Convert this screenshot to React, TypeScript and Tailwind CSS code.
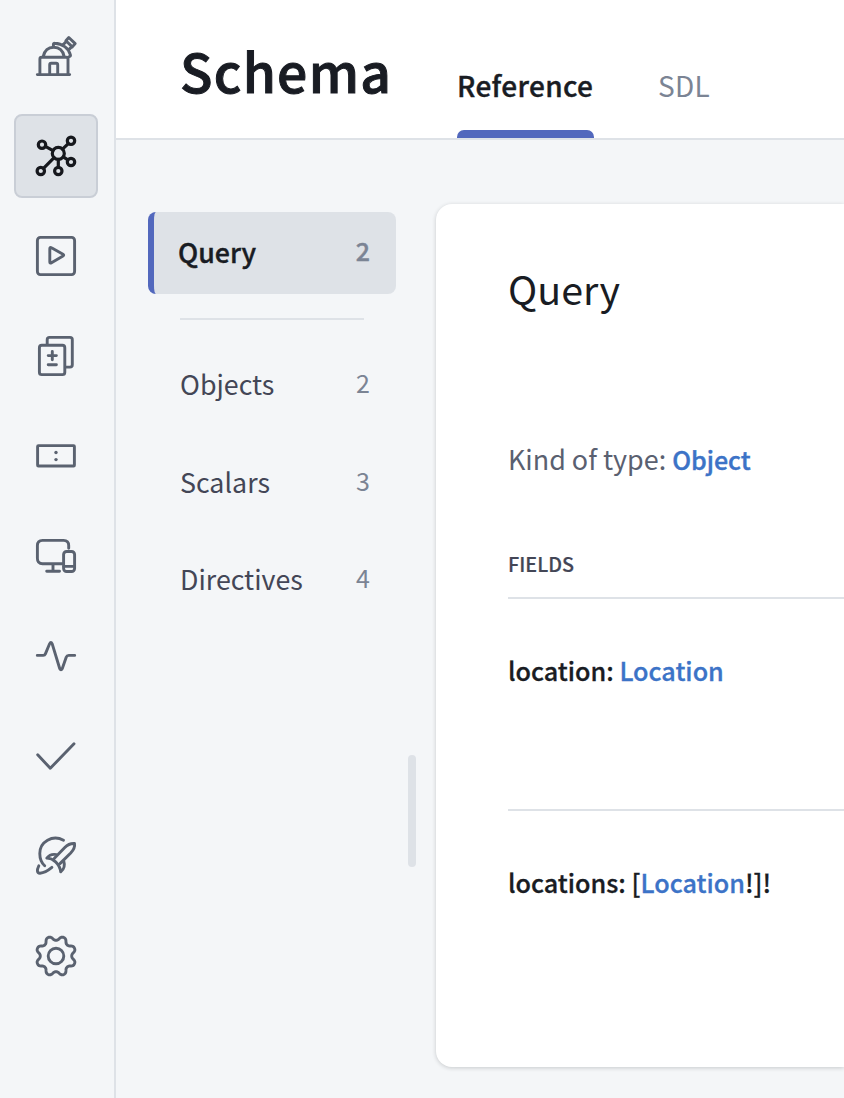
import type { ReactNode } from "react";

const gearPath =
  Array.from({ length: 160 }, (_, i) => {
    const a = (i / 160) * Math.PI * 2;
    const r = 17.9 - 2.6 * Math.tanh(1.2 * Math.cos(8 * a));
    return `${i ? "L" : "M"}${(24 + r * Math.sin(a)).toFixed(2)} ${(24 - r * Math.cos(a)).toFixed(2)}`;
  }).join("") + "Z";

const icons: { name: string; art: ReactNode }[] = [
  {
    name: "Observatory",
    art: (
      <>
        <path d="M5.3 42.6H37.7M7.9 42V27.1q0-1.8 1.8-1.8H34.2q1.8 0 1.8 1.8V42M17.7 42V32.8q0-1.5 1.5-1.5h5q1.5 0 1.5 1.5V42M11.2 24.6C12.5 18.5 16.5 15.2 21.7 15.2S31 18.5 32.2 24.6" />
        <path d="M21.4 14.7V12.4q0-1.2 1.2-1.1C30.5 11.6 36.5 16.2 38.4 22.9q.3 1.2-.7 1.5L36.5 25.1M31.6 12.2L34.4 9.2M36.8 17.6L39.8 14.6M36.8 5.5L33.9 8.7L40.3 14.9L43.2 11.6Z" />
      </>
    ),
  },
  {
    name: "Schema",
    art: (
      <g strokeWidth="3.2">
        <circle cx="26.3" cy="21.4" r="6" />
        <circle cx="10" cy="12.7" r="3.7" />
        <circle cx="39" cy="8.8" r="3.7" />
        <circle cx="39" cy="30" r="3.7" />
        <circle cx="26.3" cy="39" r="3.7" />
        <circle cx="8.8" cy="39" r="3.7" />
        <path d="M13.4 14.4L21 18.6M36.3 11.6L30.5 17.2M31.3 24.8L35.8 27.8M26.3 27.4V35.3M11.5 36.3L22.1 25.7" />
      </g>
    ),
  },
  {
    name: "Explorer",
    art: (
      <>
        <rect x="5.4" y="5.4" width="37.2" height="37.2" rx="3" />
        <path d="M17.8 16.7q0-1.9 1.7-.9L31 22.2q1.4.9 0 1.7L19.5 30.8q-1.7 1-1.7-.9Z" />
      </>
    ),
  },
  {
    name: "Changelog",
    art: (
      <>
        <rect x="7.4" y="13.3" width="25.4" height="29.3" rx="2.4" />
        <path d="M15.2 12.5V7.7q0-2.3 2.3-2.3H38q2.3 0 2.3 2.3V32.8q0 2.3-2.3 2.3H34M20.3 19.5V27.7M16.2 23.6H24.4M16.2 32.7H24.4" />
      </>
    ),
  },
  {
    name: "Fields",
    art: (
      <>
        <rect x="5.6" y="13.6" width="36.8" height="20.4" rx="0.8" />
        <circle cx="24" cy="20.5" r="1.7" fill="currentColor" stroke="none" />
        <circle cx="24" cy="27.6" r="1.7" fill="currentColor" stroke="none" />
      </>
    ),
  },
  {
    name: "Clients",
    art: (
      <>
        <path d="M36.7 16.3V13.6q0-5.2-5.2-5.2H10.6q-5.2 0-5.2 5.2V26.5q0 5.2 5.2 5.2H30M21 32V39M14.7 39.3H27.5" />
        <rect x="31.6" y="19.5" width="11" height="20" rx="3" />
        <path d="M32 34.4H42" />
      </>
    ),
  },
  {
    name: "Operations",
    art: (
      <path d="M5.3 23.4H11.2Q12.8 23.4 13.4 21.9L17.6 11.8Q18.9 9.2 20.2 11.8L27.7 36.5Q29 39 30.3 36.5L34.2 25.2Q34.9 23.4 36.7 23.4H42.7" />
    ),
  },
  { name: "Checks", art: <path d="M5.7 22.8L18.3 36.3L42 11.7" /> },
  {
    name: "Launches",
    art: (
      <path d="M31.5 8.2C20.5 2.2 7.8 9.8 7.8 21.5C7.8 26.5 9.4 30.8 12.7 33.8M6.8 33.8C4.7 38 4.9 41.3 8 41.2C11.5 41 15.8 38.8 19.9 35.4M22.4 26.2L32.8 15.5C35.5 12.7 39.5 11.3 42.5 11.5C43 14.5 41.3 18.3 38.7 21L28.2 31.4M24.5 22.6C20.2 21.8 17.3 22.8 14.8 26.1C20.8 26.1 27.7 31.5 28.7 39.9C32.3 37.1 33.2 33.5 31.7 28.7" />
    ),
  },
  {
    name: "Settings",
    art: (
      <>
        <path d={gearPath} />
        <circle cx="24" cy="24" r="7.8" />
      </>
    ),
  },
];

const groups = [
  { label: "Objects", count: 2 },
  { label: "Scalars", count: 3 },
  { label: "Directives", count: 4 },
];

export default function App() {
  return (
    <div className="flex h-[1098px] w-full overflow-hidden bg-[#f4f6f8] font-['Noto_Sans_CJK_SC',sans-serif] text-[#191c23]">
      <nav className="flex w-[116px] shrink-0 flex-col items-center gap-4 border-r-2 border-[#dee2e7] pt-[14px] pr-[2px]">
        {icons.map(({ name, art }) => (
          <button
            key={name}
            aria-label={name}
            className={
              name === "Schema"
                ? "flex size-[84px] shrink-0 items-center justify-center rounded-lg border-2 border-[#c9ced6] bg-[#dee2e7] text-[#16181d]"
                : "flex size-[84px] shrink-0 items-center justify-center text-[#5a6270]"
            }
          >
            <svg
              viewBox="0 0 48 48"
              className="size-12"
              fill="none"
              stroke="currentColor"
              strokeWidth="2.9"
              strokeLinecap="round"
              strokeLinejoin="round"
            >
              {art}
            </svg>
          </button>
        ))}
      </nav>
      <div className="flex min-w-0 grow flex-col">
        <header className="flex h-[140px] shrink-0 border-b-2 border-[#dee2e7] bg-white pl-16">
          <h1 className="w-[277px] pt-[30px] text-[53.4px] leading-[80px] font-medium tracking-[1.3px] [-webkit-text-stroke:1px]">
            Schema
          </h1>
          <div className="flex w-[137px] flex-col justify-between">
            <span className="pt-[65px] text-[28px] leading-[40px] font-medium tracking-[0.35px] [-webkit-text-stroke:0.4px]">
              Reference
            </span>
            <span className="h-2 rounded-t-[7px] bg-[#5268bd]" />
          </div>
          <span className="ml-16 pt-[65px] text-[28px] leading-[40px] tracking-[0.3px] text-[#7b8494]">SDL</span>
        </header>
        <div className="flex grow">
          <aside className="flex w-[292px] shrink-0 flex-col pt-[72px] pl-8">
            <div className="flex h-[82px] w-[248px] items-center justify-between rounded-lg border-l-[6px] border-[#5268bd] bg-[#dee2e7] pr-[26px] pl-6 font-medium [-webkit-text-stroke:0.4px]">
              <span className="pb-[2px] text-[26.8px] leading-[40px]">Query</span>
              <span className="pb-[6px] text-[25px] leading-[40px] text-[#7b8494]">2</span>
            </div>
            <div className="mt-6 ml-8 h-[2px] w-[184px] bg-[#dee2e7]" />
            <div className="mt-4 flex w-[248px] flex-col">
              {groups.map(({ label, count }) => (
                <div key={label} className="flex h-[97.5px] items-center justify-between pr-[26px] pl-8">
                  <span className="pb-px text-[26.8px] leading-[40px] text-[#434656]">{label}</span>
                  <span className="pb-[5px] text-[25px] leading-[40px] text-[#7b8494]">{count}</span>
                </div>
              ))}
            </div>
            <div className="mt-[126px] ml-[260px] h-28 w-2 rounded-full bg-[#dee2e7]" />
          </aside>
          <div className="min-w-0 grow pt-16 pl-7">
            <main className="h-[863px] rounded-l-2xl bg-white pt-[54px] pl-[72px] shadow-[0_1px_4px_rgba(25,28,35,0.2)]">
              <h2 className="text-[39.4px] leading-[60px]">Query</h2>
              <p className="mt-[121px] text-[26.9px] leading-[40px] text-[#5a6070]">
                Kind of type:{" "}
                <a className="text-[25px] font-medium text-[#3c73c7] [-webkit-text-stroke:0.4px]">Object</a>
              </p>
              <h3 className="mt-[72px] text-[19.8px] leading-[26px] font-medium text-[#434656] [-webkit-text-stroke:0.2px]">
                FIELDS
              </h3>
              <div className="mt-[20px] h-[212px] border-t-2 border-[#dee2e7] pt-[51px] text-[25.2px] leading-[40px] font-medium [-webkit-text-stroke:0.3px]">
                location: <a className="text-[#3c73c7]">Location</a>
              </div>
              <div className="border-t-2 border-[#dee2e7] pt-[51px] text-[25.2px] leading-[40px] font-medium [-webkit-text-stroke:0.3px]">
                locations: [<a className="text-[#3c73c7]">Location</a>!]!
              </div>
            </main>
          </div>
        </div>
      </div>
    </div>
  );
}
